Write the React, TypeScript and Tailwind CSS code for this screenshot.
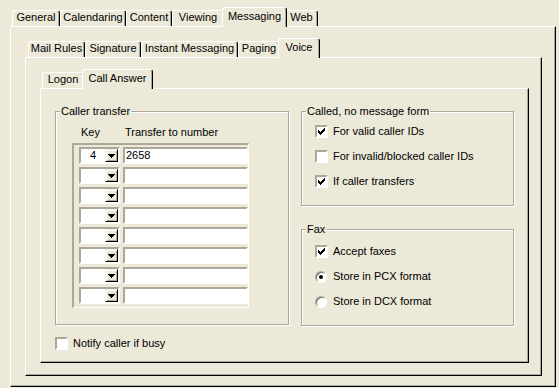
import React from 'react'
import clsx from 'clsx'

type TabDef = {
    label: string
    className: string
    active?: boolean
}

const Tab: React.FC<TabDef> = ({ label, className, active }) => (
    <div
        className={clsx(
            'flex shrink-0 justify-center whitespace-nowrap rounded-t-[3px] border-x border-t border-l-white border-r-black border-t-white bg-[#ECE9D8] shadow-[inset_-1px_0_0_#ACA899]',
            active ? 'relative z-10 -mx-[2px] -mb-px h-[20px] pt-[2px]' : 'h-[16px]',
            className
        )}
    >
        {label}
    </div>
)

const TabStrip: React.FC<{ tabs: TabDef[]; className?: string }> = ({ tabs, className }) => (
    <div className={clsx('flex items-end', className)}>
        {tabs.map((t) => (
            <Tab key={t.label} {...t} />
        ))}
    </div>
)

const Panel: React.FC<{ className?: string; children?: React.ReactNode }> = ({ className, children }) => (
    <div
        className={clsx(
            'flex flex-col border border-b-black border-l-white border-r-black border-t-white bg-[#ECE9D8] shadow-[inset_-1px_-1px_0_#ACA899]',
            className
        )}
    >
        {children}
    </div>
)

const GroupBox: React.FC<{ label: string; className?: string; children?: React.ReactNode }> = ({
    label,
    className,
    children,
}) => (
    <div className={clsx('relative border border-[#ACA899] shadow-[inset_1px_1px_0_white,1px_1px_0_white]', className)}>
        <span className="absolute left-[4px] top-[-7px] bg-[#ECE9D8] px-px">{label}</span>
        {children}
    </div>
)

const sunken = 'border-2 border-b-white border-l-[#ACA899] border-r-white border-t-[#ACA899] bg-white'

const CheckMark = () => (
    <svg width="7" height="7" viewBox="0 0 7 7" shapeRendering="crispEdges">
        <rect x="6" y="0" width="1" height="1" fill="black" />
        <rect x="5" y="1" width="2" height="1" fill="black" />
        <rect x="0" y="2" width="1" height="1" fill="black" />
        <rect x="4" y="2" width="3" height="1" fill="black" />
        <rect x="0" y="3" width="2" height="1" fill="black" />
        <rect x="3" y="3" width="3" height="1" fill="black" />
        <rect x="0" y="4" width="5" height="1" fill="black" />
        <rect x="1" y="5" width="3" height="1" fill="black" />
        <rect x="2" y="6" width="1" height="1" fill="black" />
    </svg>
)

const Checkbox: React.FC<{ label: string; checked?: boolean }> = ({ label, checked }) => (
    <div className="flex h-[13px] items-center gap-[5px]">
        <div className={clsx('flex h-[13px] w-[13px] shrink-0 items-center justify-center', sunken)}>
            {checked && <CheckMark />}
        </div>
        <span className="whitespace-nowrap">{label}</span>
    </div>
)

const Radio: React.FC<{ label: string; checked?: boolean }> = ({ label, checked }) => (
    <div className="flex h-[13px] items-center gap-[6px]">
        <div className="flex h-[12px] w-[12px] shrink-0 items-center justify-center rounded-full border border-b-white border-l-[#ACA899] border-r-white border-t-[#ACA899] bg-white shadow-[inset_1px_1px_0_#716F64]">
            {checked && <div className="h-[4px] w-[4px] rounded-full bg-black" />}
        </div>
        <span className="whitespace-nowrap">{label}</span>
    </div>
)

const DropButton = () => (
    <div className="flex h-[13px] w-[13px] shrink-0 items-center justify-center border border-b-black border-l-[#F1EFE2] border-r-black border-t-[#F1EFE2] bg-[#ECE9D8] shadow-[inset_1px_1px_0_white,inset_-1px_-1px_0_#ACA899]">
        <svg width="7" height="4" viewBox="0 0 7 4" shapeRendering="crispEdges">
            <rect x="0" y="0" width="7" height="1" fill="black" />
            <rect x="1" y="1" width="5" height="1" fill="black" />
            <rect x="2" y="2" width="3" height="1" fill="black" />
            <rect x="3" y="3" width="1" height="1" fill="black" />
        </svg>
    </div>
)

const transfers = [
    { key: '4', number: '2658' },
    { key: '', number: '' },
    { key: '', number: '' },
    { key: '', number: '' },
    { key: '', number: '' },
    { key: '', number: '' },
    { key: '', number: '' },
    { key: '', number: '' },
]

const outerTabs: TabDef[] = [
    { label: 'General', className: 'w-[48px]' },
    { label: 'Calendaring', className: 'w-[66px]' },
    { label: 'Content', className: 'w-[46px]' },
    { label: 'Viewing', className: 'w-[52px]' },
    { label: 'Messaging', className: 'w-[65px]', active: true },
    { label: 'Web', className: 'w-[33px]' },
]

const messagingTabs: TabDef[] = [
    { label: 'Mail Rules', className: 'w-[57px]' },
    { label: 'Signature', className: 'w-[56px]' },
    { label: 'Instant Messaging', className: 'w-[97px]' },
    { label: 'Paging', className: 'w-[42px]' },
    { label: 'Voice', className: 'w-[42px]', active: true },
]

const voiceTabs: TabDef[] = [
    { label: 'Logon', className: 'w-[42px]' },
    { label: 'Call Answer', className: 'w-[71px]', active: true },
]

export default function App() {
    return (
        <div className="flex h-[388px] w-[559px] flex-col bg-[#ECE9D8] pb-px pl-[10px] pr-[3px] pt-[7px] font-['Liberation_Sans',Arial,sans-serif] text-[11px] leading-[13px] text-black">
            <TabStrip tabs={outerTabs} className="ml-[2px]" />
            <Panel className="flex-1">
                <TabStrip tabs={messagingTabs} className="ml-[17px] mt-[11px]" />
                <Panel className="mb-[10px] ml-[14px] mr-[13px] flex-1">
                    <TabStrip tabs={voiceTabs} className="ml-[16px] mt-[11px]" />
                    <Panel className="mb-[12px] ml-[14px] mr-[12px] flex-1">
                        <div className="flex gap-[12px] pl-[14px] pt-[22px]">
                            <div className="flex w-[234px] flex-col">
                                <GroupBox label="Caller transfer" className="h-[214px]">
                                    <div className="flex pl-[25px] pt-[14px]">
                                        <span className="w-[44px]">Key</span>
                                        <span>Transfer to number</span>
                                    </div>
                                    <div className="ml-[16px] mt-[4px] flex w-[177px] flex-col gap-[3px] border-b border-l-2 border-r border-t-2 border-b-white border-l-[#ACA899] border-r-white border-t-[#ACA899] pb-[3px] pl-[5px] pt-[2px]">
                                        {transfers.map((row, i) => (
                                            <div key={i} className="flex gap-[3px]">
                                                <div className={clsx('flex h-[17px] w-[41px]', sunken)}>
                                                    <div className="flex-1 text-center">{row.key}</div>
                                                    <DropButton />
                                                </div>
                                                <div className={clsx('h-[17px] w-[125px] pl-px', sunken)}>{row.number}</div>
                                            </div>
                                        ))}
                                    </div>
                                </GroupBox>
                                <div className="mt-[12px]">
                                    <Checkbox label="Notify caller if busy" />
                                </div>
                            </div>
                            <div className="flex w-[213px] flex-col">
                                <GroupBox label="Called, no message form" className="h-[95px]">
                                    <div className="flex flex-col gap-[12px] pl-[13px] pt-[13px]">
                                        <Checkbox label="For valid caller IDs" checked />
                                        <Checkbox label="For invalid/blocked caller IDs" />
                                        <Checkbox label="If caller transfers" checked />
                                    </div>
                                </GroupBox>
                                <GroupBox label="Fax" className="mt-[23px] h-[97px]">
                                    <div className="flex flex-col gap-[12px] pl-[13px] pt-[15px]">
                                        <Checkbox label="Accept faxes" checked />
                                        <Radio label="Store in PCX format" checked />
                                        <Radio label="Store in DCX format" />
                                    </div>
                                </GroupBox>
                            </div>
                        </div>
                    </Panel>
                </Panel>
            </Panel>
        </div>
    )
}
